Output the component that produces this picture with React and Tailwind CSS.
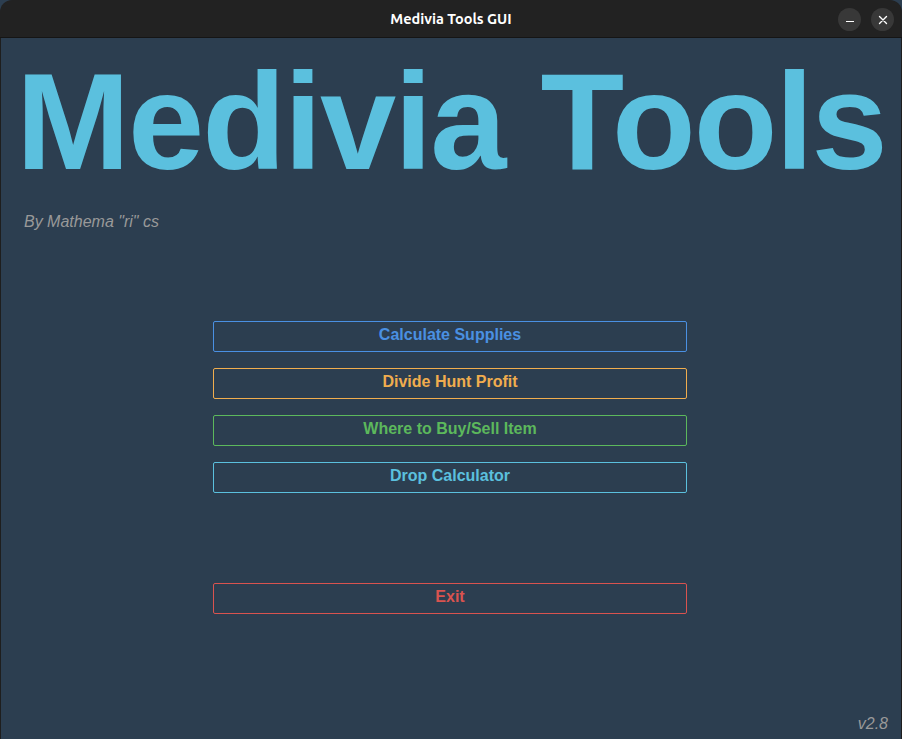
import React from 'react';

const buttons = [
    { label: 'Calculate Supplies', cls: 'border-[#4a90e2] text-[#4a90e2]' },
    { label: 'Divide Hunt Profit', cls: 'border-[#f0ad4e] text-[#f0ad4e]' },
    { label: 'Where to Buy/Sell Item', cls: 'border-[#5cb85c] text-[#5cb85c]' },
    { label: 'Drop Calculator', cls: 'border-[#5bc0de] text-[#5bc0de]' },
];

const App = () => {
    return (
        <div className="w-[902px] h-[739px] flex flex-col bg-[#2c3e50] overflow-hidden font-['Liberation_Sans',Arial,sans-serif]">
            {/* title bar */}
            <div className="h-[38px] shrink-0 bg-[#222222] rounded-t-[12px] border-b border-[#151515] flex items-center relative">
                <div className="flex-1 text-center text-white font-bold text-[14.5px] font-['Ubuntu','Noto_Sans',sans-serif]">
                    Medivia Tools GUI
                </div>
                <div className="absolute right-[8px] top-[8px] flex gap-[10px]">
                    <button className="w-[23px] h-[23px] rounded-full bg-[#383838] flex items-center justify-center">
                        <span className="block w-[8px] h-[1.5px] bg-white mt-[4px]" />
                    </button>
                    <button className="w-[23px] h-[23px] rounded-full bg-[#383838] flex items-center justify-center">
                        <svg width="10" height="10" viewBox="0 0 10 10" stroke="white" strokeWidth="1.4" strokeLinecap="round">
                            <path d="M1.5 1.5 L8.5 8.5 M8.5 1.5 L1.5 8.5" />
                        </svg>
                    </button>
                </div>
            </div>

            {/* body */}
            <div className="flex-1 flex flex-col border-x border-[#1e1e1e] relative">
                <h1 className="text-[137px] leading-[137px] font-bold text-[#5bc0de] tracking-[-2px] pl-[15px] mt-[15px] whitespace-nowrap">
                    Medivia Tools
                </h1>
                <p className="italic text-[16px] text-[#999999] pl-[23px] mt-[20px]">
                    By Mathema "ri" cs
                </p>

                <div className="flex flex-col gap-[16px] w-[474px] ml-[212px] mt-[87px]">
                    {buttons.map((b) => (
                        <button
                            key={b.label}
                            className={`h-[31px] border rounded-[2px] bg-transparent font-bold text-[16px] flex items-center justify-center pb-[3px] ${b.cls}`}
                        >
                            {b.label}
                        </button>
                    ))}
                </div>

                <div className="w-[474px] ml-[212px] mt-[90px]">
                    <button className="w-full h-[31px] border rounded-[2px] border-[#d9534f] text-[#d9534f] font-bold text-[16px] flex items-center justify-center pb-[3px]">
                        Exit
                    </button>
                </div>

                <div className="absolute right-[13px] bottom-[3px] italic text-[16px] text-[#999999]">
                    v2.8
                </div>
            </div>
        </div>
    );
};

export default App;
